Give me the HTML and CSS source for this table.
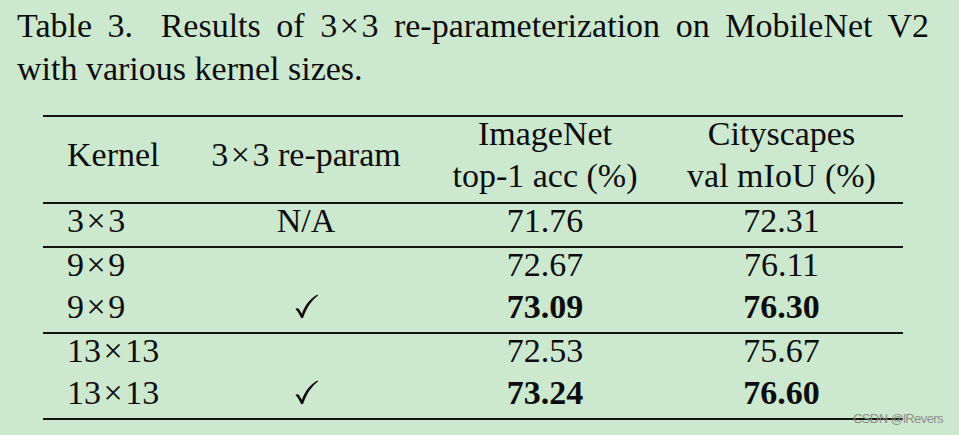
FILE: index.html
```html
<!DOCTYPE html>
<html lang="en">
<head>
<meta charset="UTF-8">
<meta name="viewport" content="width=device-width, initial-scale=1.0">
<title>Table 3 - 3x3 re-parameterization</title>
<link rel="stylesheet" href="styles.css">
</head>
<body>

<div class="page">
  <p class="caption">
    <span class="cap-line first">Table 3.<span class="gap"></span> Results of 3<span class="x">×</span>3 re-parameterization on MobileNet V2</span>
    <span class="cap-line">with various kernel sizes.</span>
  </p>

  <table class="results">
    <colgroup>
      <col class="c-kernel"><col class="c-rep"><col class="c-in"><col class="c-cs">
    </colgroup>
    <thead>
      <tr>
        <th class="left">Kernel</th>
        <th>3<span class="x">×</span>3 re-param</th>
        <th><span class="hl">ImageNet</span><span class="hl">top-1 acc (%)</span></th>
        <th><span class="hl">Cityscapes</span><span class="hl">val mIoU (%)</span></th>
      </tr>
    </thead>
    <tbody>
      <tr><td class="left">3<span class="x">×</span>3</td><td>N/A</td><td>71.76</td><td>72.31</td></tr>
    </tbody>
    <tbody>
      <tr><td class="left">9<span class="x">×</span>9</td><td></td><td>72.67</td><td>76.11</td></tr>
      <tr>
        <td class="left">9<span class="x">×</span>9</td>
        <td><svg class="check" viewBox="0 0 24 26" width="23" height="25"><path d="M0.5 15.5C2 14.4 3.6 14.8 4.6 16.4L7.2 20.6C10.2 12 15.2 5 23.4 0.4L24 1.6C17 7.2 12.2 14.2 8.6 24.6C8.1 25.6 6.6 25.6 6.1 24.6C4.6 21 2.6 17.6 0.5 15.5Z"/></svg></td>
        <td><b>73.09</b></td><td><b>76.30</b></td>
      </tr>
    </tbody>
    <tbody>
      <tr><td class="left">13<span class="x">×</span>13</td><td></td><td>72.53</td><td>75.67</td></tr>
      <tr>
        <td class="left">13<span class="x">×</span>13</td>
        <td><svg class="check" viewBox="0 0 24 26" width="23" height="25"><path d="M0.5 15.5C2 14.4 3.6 14.8 4.6 16.4L7.2 20.6C10.2 12 15.2 5 23.4 0.4L24 1.6C17 7.2 12.2 14.2 8.6 24.6C8.1 25.6 6.6 25.6 6.1 24.6C4.6 21 2.6 17.6 0.5 15.5Z"/></svg></td>
        <td><b>73.24</b></td><td><b>76.60</b></td>
      </tr>
    </tbody>
  </table>

  <div class="watermark">CSDN @lRevers</div>
</div>

</body>
</html>
```

FILE: styles.css
```css
:root {
  --bg:#cce8cf; --ink:#0d0d0d; --rule:#141414; --mark:#8e8e8e;
}
html,body{margin:0;background:var(--bg)}
body{color:var(--ink);font-family:"Liberation Serif","Times New Roman",serif;font-size:34px}
.page{position:relative;width:959px;height:435px;padding-top:5px;box-sizing:border-box}

/* caption */
.caption{margin:0 30px 0 17px}
.cap-line{display:block;line-height:42.5px;white-space:nowrap}
.cap-line.first{text-align:justify;text-align-last:justify;white-space:normal}
.gap{display:inline-block;width:12px}
.x{margin:0 2.5px}

/* table */
.results{margin:25px 0 0 43px;width:860px;table-layout:fixed;border-collapse:separate;border-spacing:0}
.c-kernel{width:139px}.c-rep{width:248px}.c-in{width:230px}.c-cs{width:243px}
th,td{font-weight:400;text-align:center;white-space:nowrap;padding:0}
th{line-height:33px;padding-bottom:9.3px;vertical-align:middle;border-top:2px solid var(--rule);border-bottom:2px solid var(--rule)}
td{line-height:33px;height:33px;padding-bottom:9px;vertical-align:top}
tbody tr:last-child td{border-bottom:2px solid var(--rule)}
.left{text-align:left;padding-left:24px}
.hl{display:block;line-height:33px}
.hl+.hl{margin-top:9.4px}
b{font-weight:700}
.check{vertical-align:-1px;fill:var(--ink)}

.watermark{position:absolute;left:853px;top:411px;font-family:"Liberation Sans",Arial,sans-serif;font-size:13px;letter-spacing:-0.6px;color:var(--mark)}
```
